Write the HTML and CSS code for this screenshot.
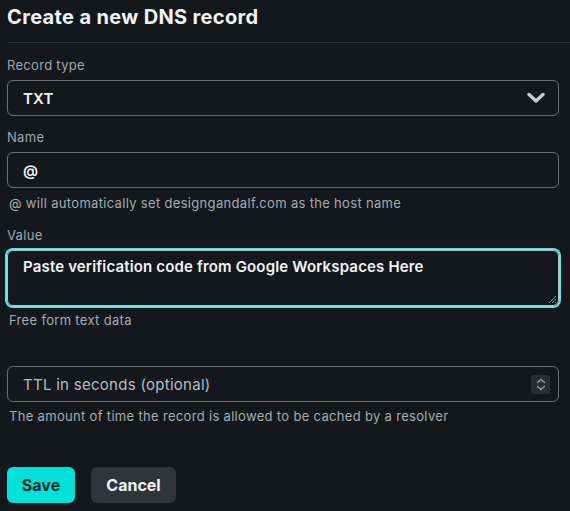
FILE: index.html
```html
<!DOCTYPE html>
<html>
<head>
<meta charset="utf-8">
<link rel="stylesheet" href="styles.css">
</head>
<body>
<div class="page">
  <h1 class="title">Create a new DNS record</h1>
  <form class="form">
    <div class="field">
      <label class="label">Record type</label>
      <div class="control select">
        <span class="value">TXT</span>
        <svg class="chevron" width="18" height="12" viewBox="0 0 18 12"><path d="M2 2.5 L9 9 L16 2.5" fill="none" stroke="#c9ced4" stroke-width="3.4" stroke-linecap="round" stroke-linejoin="round"/></svg>
      </div>
    </div>
    <div class="field name-field">
      <label class="label">Name</label>
      <div class="control"><span class="value">@</span></div>
      <p class="help">@ will automatically set designgandalf.com as the host name</p>
    </div>
    <div class="field value-field">
      <label class="label">Value</label>
      <div class="control textarea">
        <span class="value">Paste verification code from Google Workspaces Here</span>
        <svg class="grip" width="10" height="10" viewBox="0 0 10 10"><path d="M9 2 L2 9 M9 5 L5 9 M9 8 L8 9" stroke="#7d848c" stroke-width="1"/></svg>
      </div>
      <p class="help help-tight">Free form text data</p>
    </div>
    <div class="field ttl-field">
      <div class="control">
        <span class="placeholder">TTL in seconds (optional)</span>
        <span class="spinner">
          <svg width="18" height="19" viewBox="0 0 18 19"><path d="M5.5 7.5 L9 4.5 L12.5 7.5 M5.5 11.5 L9 14.5 L12.5 11.5" fill="none" stroke="#9aa1a9" stroke-width="1.3" stroke-linecap="round" stroke-linejoin="round"/></svg>
        </span>
      </div>
      <p class="help">The amount of time the record is allowed to be cached by a resolver</p>
    </div>
    <div class="actions">
      <button type="button" class="btn btn-save">Save</button>
      <button type="button" class="btn btn-cancel">Cancel</button>
    </div>
  </form>
</div>
</body>
</html>
```
FILE: styles.css
```css
html, body {
  margin: 0;
  padding: 0;
  background: #14181c;
}
body {
  font-family: Inter, "Liberation Sans", Arial, sans-serif;
  color: #e6edf3;
  width: 570px;
  height: 511px;
  overflow: hidden;
}
.page {
  padding: 5px 0 0 7px;
}
.title {
  margin: 0;
  font-size: 20px;
  line-height: 24px;
  font-weight: 700;
  letter-spacing: 0.35px;
  color: #f0f3f6;
  padding-bottom: 13px;
  border-bottom: 1px solid #2b3036;
}
.form {
  width: 552px;
  padding-top: 14px;
}
.field {
  display: flex;
  flex-direction: column;
}
.label {
  font-size: 13px;
  line-height: 16px;
  letter-spacing: 0.3px;
  color: #9ea6ae;
  margin-bottom: 7px;
}
.control {
  box-sizing: border-box;
  height: 36px;
  border: 1px solid #6a7078;
  border-radius: 6px;
  display: flex;
  align-items: center;
  padding: 0 15px;
  position: relative;
}
.value {
  font-size: 15px;
  font-weight: 600;
  letter-spacing: 0.16px;
  color: #f0f3f6;
}
.select {
  justify-content: space-between;
  padding-right: 13px;
}
.chevron {
  display: block;
}
.name-field {
  margin-top: 13px;
}
.help {
  margin: 7px 0 0 2px;
  font-size: 13px;
  line-height: 16px;
  letter-spacing: 0.32px;
  color: #a3abb3;
}
.value-field {
  margin-top: 16px;
}
.textarea {
  height: 56px;
  align-items: flex-start;
  padding-top: 6px;
  border: 1px solid #b9c2c7;
  box-shadow: 0 0 0 2px #5de6e2;
  border-radius: 6px;
}
.grip {
  position: absolute;
  right: 1px;
  bottom: 1px;
}
.help-tight {
  margin-top: 6px;
}
.ttl-field {
  margin-top: 38px;
}
.ttl-field .control {
  justify-content: space-between;
  padding-right: 8px;
}
.placeholder {
  font-size: 15px;
  letter-spacing: 0.28px;
  color: #b4bbc2;
}
.spinner {
  width: 19px;
  height: 19px;
  background: #2a2e34;
  border-radius: 2px;
  display: flex;
  align-items: center;
  justify-content: center;
}
.spinner svg {
  display: block;
}
.ttl-field .help {
  margin-top: 6px;
}
.actions {
  display: flex;
  gap: 16px;
  margin-top: 43px;
}
.btn {
  height: 36px;
  border: none;
  border-radius: 6px;
  font-family: Inter, "Liberation Sans", Arial, sans-serif;
  font-size: 16px;
  font-weight: 700;
  padding: 0;
}
.btn-save {
  background: #00e1d9;
  color: #0f2a2c;
  width: 68px;
}
.btn-cancel {
  background: #30353c;
  color: #f0f3f6;
  width: 85px;
}
```
